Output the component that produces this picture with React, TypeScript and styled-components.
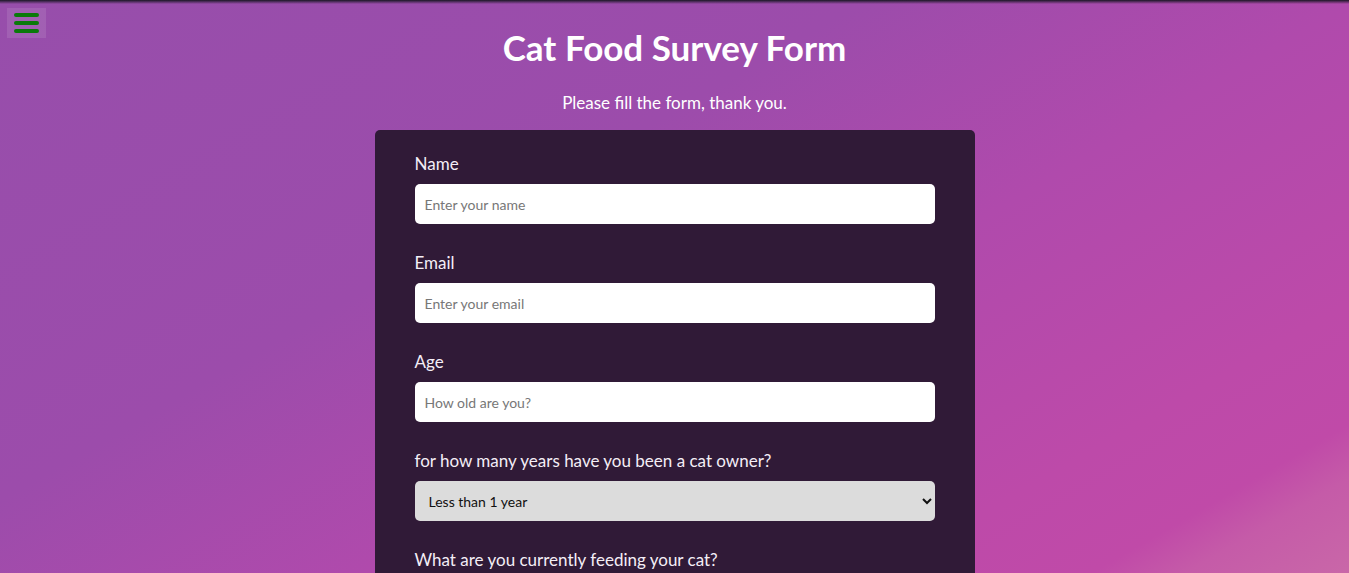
import React from "react";
import styled, { createGlobalStyle } from "styled-components";

const GlobalStyle = createGlobalStyle`
  html, body { margin: 0; padding: 0; }
  body {
    font-family: Lato, "Open Sans", sans-serif;
    color: #fff;
    background: linear-gradient(150deg, #974eab 0%, #9c4cab 37%, #b04aac 58%, #bd4aa9 80%, #c04aa8 89%, #c55ba8 93%, #c967a8 100%);
    background-attachment: fixed;
    min-height: 100vh;
    overflow-x: hidden;
  }
  body::-webkit-scrollbar { display: none; }
  * { box-sizing: border-box; }
`;

const TopShade = styled.div`
  position: fixed;
  top: 0;
  left: 0;
  right: 0;
  height: 4px;
  background: linear-gradient(to bottom, rgba(20, 20, 30, 0.95), rgba(40, 20, 50, 0));
  pointer-events: none;
`;

const MenuButton = styled.button`
  position: fixed;
  top: 8px;
  left: 7px;
  width: 39px;
  height: 30px;
  border: none;
  padding: 0;
  background: rgba(255, 255, 255, 0.1);
  display: flex;
  flex-direction: column;
  align-items: center;
  justify-content: center;
  gap: 4px;
  cursor: pointer;
`;

const Bar = styled.span`
  display: block;
  width: 25px;
  height: 4px;
  border-radius: 2px;
  background: #0a7a0a;
`;

const Page = styled.main`
  display: flex;
  flex-direction: column;
  align-items: center;
  padding-top: 27px;
`;

const Title = styled.h1`
  margin: 0;
  font-size: 35px;
  font-weight: 700;
  line-height: 40px;
`;

const Subtitle = styled.p`
  margin: 24px 0 15px;
  font-size: 17px;
  line-height: 24px;
`;

const Card = styled.form`
  width: 600px;
  background: #301a37;
  border-radius: 5px;
  padding: 22px 40px 40px;
  display: flex;
  flex-direction: column;
  gap: 27px;
`;

const Group = styled.div`
  display: flex;
  flex-direction: column;
  gap: 8px;
`;

const Label = styled.label`
  font-size: 17px;
  line-height: 24px;
  color: #f4eef6;
`;

const Input = styled.input`
  height: 40px;
  border: none;
  border-radius: 5px;
  background: #fff;
  padding: 0 10px;
  font-family: inherit;
  font-size: 14px;
  color: #222;
  &::placeholder { color: #777; }
`;

const Select = styled.select`
  height: 40px;
  border: none;
  border-radius: 5px;
  background: #dcdcdc;
  padding: 0 10px;
  font-family: inherit;
  font-size: 14px;
  color: #111;
`;

export default function App() {
  return (
    <>
      <GlobalStyle />
      <TopShade />
      <MenuButton type="button" aria-label="Menu">
        <Bar />
        <Bar />
        <Bar />
      </MenuButton>
      <Page>
        <Title>Cat Food Survey Form</Title>
        <Subtitle>Please fill the form, thank you.</Subtitle>
        <Card>
          <Group>
            <Label htmlFor="name">Name</Label>
            <Input id="name" type="text" placeholder="Enter your name" />
          </Group>
          <Group>
            <Label htmlFor="email">Email</Label>
            <Input id="email" type="email" placeholder="Enter your email" />
          </Group>
          <Group>
            <Label htmlFor="age">Age</Label>
            <Input id="age" type="number" placeholder="How old are you?" />
          </Group>
          <Group>
            <Label htmlFor="years">for how many years have you been a cat owner?</Label>
            <Select id="years" defaultValue="lt1">
              <option value="lt1">Less than 1 year</option>
              <option value="1to5">1 - 5 years</option>
              <option value="gt5">More than 5 years</option>
            </Select>
          </Group>
          <Group>
            <Label htmlFor="food">What are you currently feeding your cat?</Label>
            <Select id="food" defaultValue="dry">
              <option value="dry">Dry food</option>
              <option value="wet">Wet food</option>
              <option value="raw">Raw food</option>
            </Select>
          </Group>
        </Card>
      </Page>
    </>
  );
}
